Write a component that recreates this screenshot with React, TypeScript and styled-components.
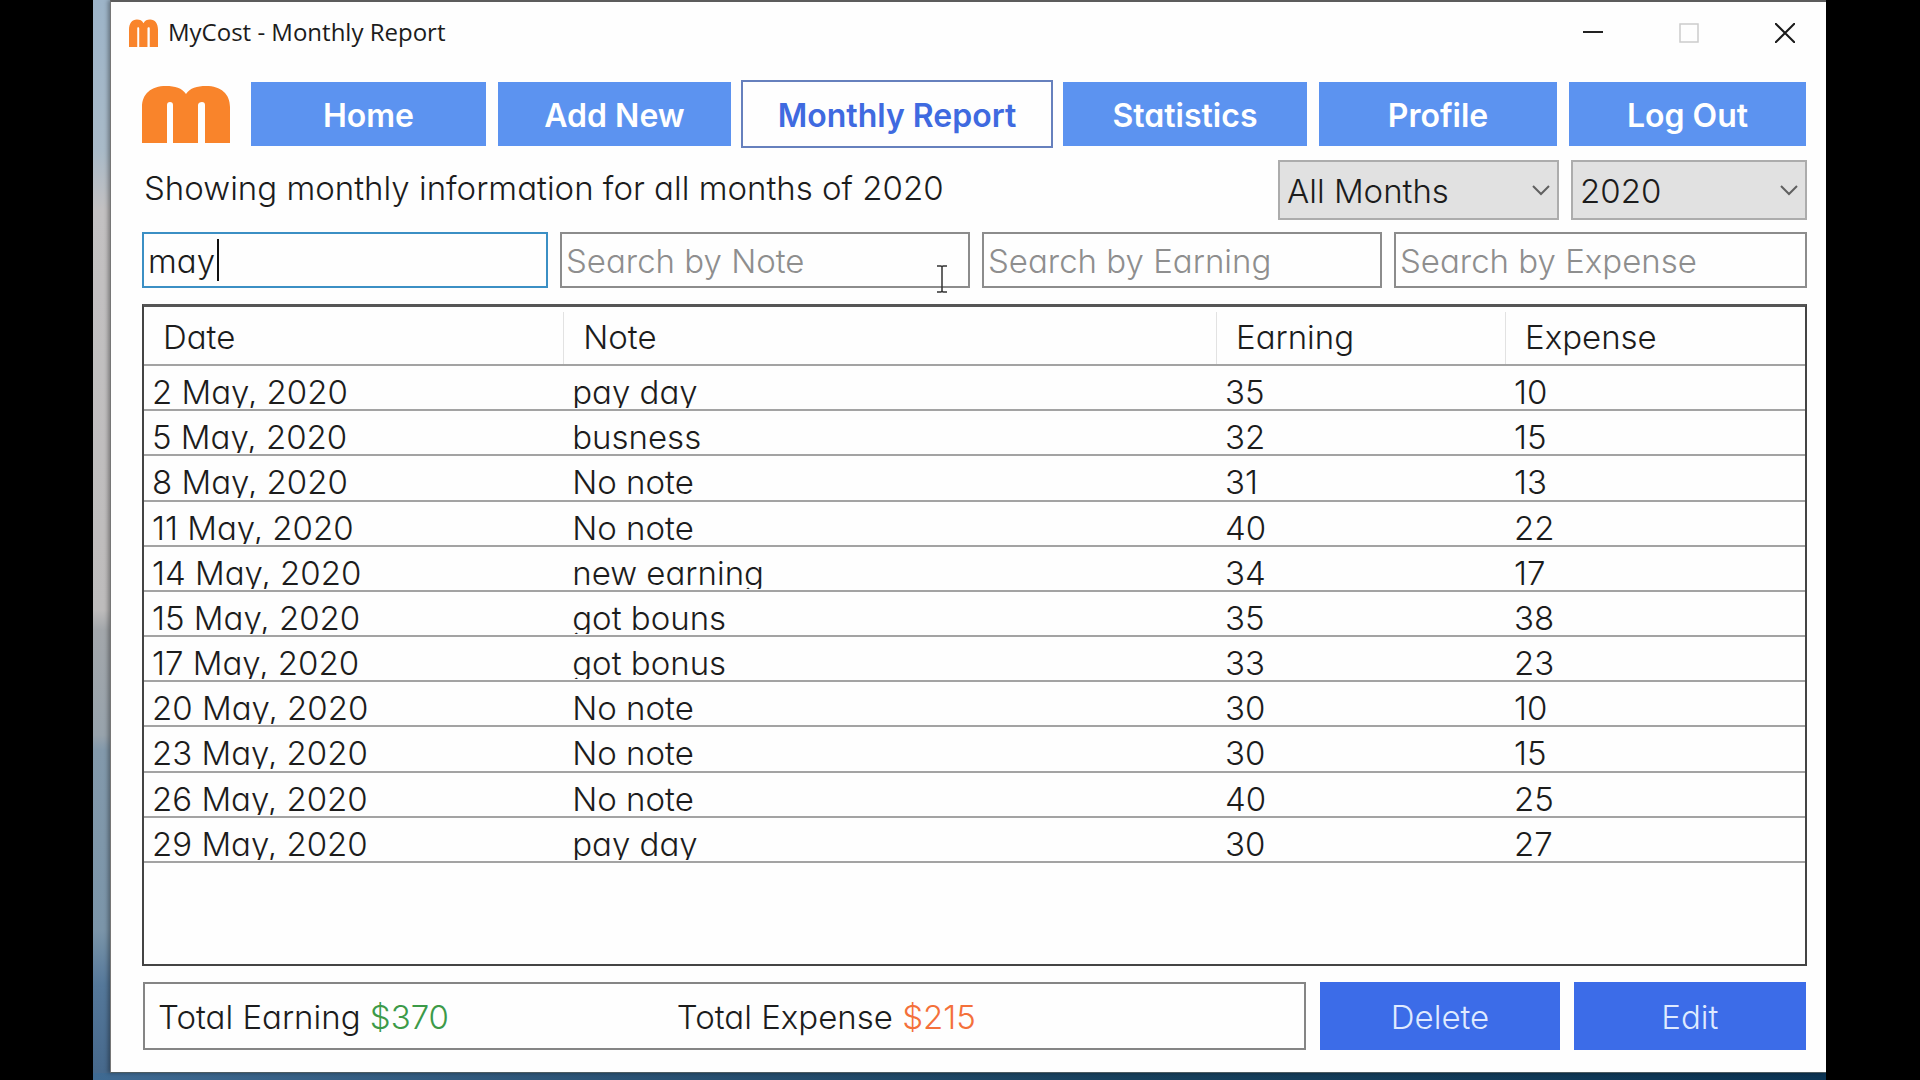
import React, { useState } from 'react';
import styled, { createGlobalStyle } from 'styled-components';

const GlobalStyle = createGlobalStyle`
  *, *::before, *::after { box-sizing: border-box; }
  body {
    margin: 0;
    background: #000;
    color: #1c1c1c;
    font-family: Inter, "Open Sans", sans-serif;
    font-size: 33px;
    font-weight: 300;
    line-height: 40px;
    font-feature-settings: "cv11" 1;
  }
  button, input, select { font: inherit; font-feature-settings: inherit; color: inherit; margin: 0; }
`;

const Stage = styled.div`
  display: flex;
  min-height: 100vh;
  padding: 0 94px 0 93px;
`;

const Desktop = styled.div`
  flex: 1;
  display: flex;
  padding: 0 0 7px 17px;
  background:
    linear-gradient(to right, #3f6a92, #2b5375 30%, #17405c 60%, #0b3454) bottom / 100% 7px no-repeat,
    linear-gradient(to bottom, #9db4c8 0, #a9bac8 150px, #c3c1c2 210px, #bebcbc 610px,
      #a3a7ab 630px, #98a3ac 735px, #8399ab 750px, #7b95a9 930px, #55789a 985px, #47698c 1071px);
`;

const Window = styled.div`
  flex: 1;
  display: flex;
  flex-direction: column;
  background: #fefefe;
  border-top: 2px solid #5c5c5c;
  border-left: 1px solid #777;
  border-bottom: 1px solid #4d5c62;
  box-shadow: -2px 0 4px rgba(0, 0, 0, 0.35);
`;

const TitleBar = styled.header`
  display: flex;
  align-items: center;
  height: 62px;
  padding-left: 18px;
  font-family: "Open Sans", "Noto Sans", sans-serif;
  font-size: 24px;
  font-weight: 400;
`;

const Title = styled.h1`
  flex: 1;
  margin: 0 0 2px 10px;
  font: inherit;
`;

const Controls = styled.div`
  display: flex;
  gap: 14px;
`;

const ControlButton = styled.button`
  display: grid;
  place-items: center;
  width: 82px;
  height: 48px;
  padding: 0;
  border: 0;
  background: none;
`;

const Main = styled.main`
  flex: 1;
  display: flex;
  flex-direction: column;
  padding: 18px 19px 22px 31px;
`;

const Nav = styled.nav`
  display: grid;
  grid-template-columns: 97px 235fr 233fr 308fr 244fr 238fr 237fr;
  gap: 12px;
  align-items: center;
  margin-right: 1px;
`;

const NavButton = styled.button<{ $active?: boolean }>`
  height: 64px;
  padding: 4px 0 0;
  border: 0;
  font-size: 32px;
  font-weight: 600;
  background: ${p => (p.$active ? '#fefefe' : '#5c93f0')};
  color: ${p => (p.$active ? '#3f6ae0' : '#fff')};
  box-shadow: ${p => (p.$active ? '0 0 0 2px #6680bd' : 'none')};
`;

const FilterRow = styled.div`
  display: grid;
  grid-template-columns: 1fr 281px 236px;
  gap: 12px;
  margin-top: 14px;
`;

const Summary = styled.p`
  margin: 8px 0 0 2px;
`;

const SelectBox = styled.div`
  display: grid;
  align-items: center;
  & > * { grid-area: 1 / 1; }
  & > svg { justify-self: end; margin-right: 8px; pointer-events: none; }
`;

const Select = styled.select`
  appearance: none;
  width: 100%;
  height: 60px;
  padding: 2px 32px 0 7px;
  border: 2px solid #acacac;
  border-radius: 0;
  background: #e1e1e1;
`;

const SearchRow = styled.div`
  display: grid;
  grid-template-columns: 406fr 410fr 400fr 413fr;
  gap: 12px;
  margin-top: 12px;
`;

const SearchInput = styled.input`
  width: 100%;
  height: 56px;
  padding: 2px 4px 0;
  border: 2px solid #8c8c8c;
  border-radius: 0;
  background: #fefefe;
  caret-color: transparent;
  outline: 0;
  &::placeholder { color: #8e8e8e; opacity: 1; }
  &:focus { border-color: #3b8fc4; }
`;

const SearchField = styled.div`
  position: relative;
`;

const Caret = styled.i`
  position: absolute;
  top: 7px;
  left: 75px;
  width: 2px;
  height: 42px;
  background: #111;
`;

const Pointer = styled.svg`
  position: absolute;
  right: 22px;
  bottom: -5px;
`;

const TablePanel = styled.div`
  flex: 1;
  margin-top: 16px;
  border: 2px solid #444;
  border-top: 3px solid #555;
`;

const Table = styled.table`
  width: 100%;
  height: 556px;
  table-layout: fixed;
  border-collapse: separate;
  border-spacing: 0;
`;

const Column = styled.col<{ $share: number }>`
  width: ${p => p.$share}%;
`;

const HeadCell = styled.th`
  height: 59px;
  padding: 0;
  border-bottom: 2px solid #a3a3a3;
  font-weight: 300;
  text-align: left;
`;

const HeadLabel = styled.div`
  height: 52px;
  margin-top: 5px;
  padding: 5px 0 0 19px;
  border-right: 1px solid #e2e2e2;
  ${HeadCell}:last-child & { border-right: 0; }
`;

const Cell = styled.td`
  padding: 0;
  border-bottom: 2px solid #a3a3a3;
  vertical-align: top;
`;

const CellText = styled.div`
  height: 42px;
  padding: 6px 0 0 8px;
  overflow: hidden;
  white-space: nowrap;
`;

const Footer = styled.footer`
  display: grid;
  grid-template-columns: 1162fr 239fr 232fr;
  gap: 14px;
  margin: 16px 1px 0;
`;

const Totals = styled.div`
  display: grid;
  grid-template-columns: 524fr 634fr;
  align-items: center;
  height: 68px;
  padding: 2px 0 0 13px;
  border: 2px solid #858585;
`;

const Amount = styled.span<{ $tone: 'earning' | 'expense' }>`
  color: ${p => (p.$tone === 'earning' ? '#3c9a48' : '#f4703a')};
`;

const ActionButton = styled.button`
  height: 68px;
  padding: 2px 0 0;
  border: 0;
  background: #3c6ce8;
  color: #dfeaff;
`;

const Logo = ({ width, height }: { width: number; height: number }) => (
  <svg width={width} height={height} viewBox="0 0 88 58" preserveAspectRatio="none" aria-hidden="true">
    <path
      fill="#f9842b"
      d="M0 58V22C0 9 9 1 24 1c9 0 16 2 20 8 4-6 11-8 20-8 15 0 24 8 24 21v36H63V20c0-2-1-3-3-3s-4 1-4 3v38H31V20c0-2-1-3-3-3s-3 1-3 3v38z"
    />
  </svg>
);

const Chevron = () => (
  <svg width="20" height="12" viewBox="0 0 20 12" fill="none" stroke="#606060" strokeWidth="2" aria-hidden="true">
    <path d="M2 2l8 8 8-8" />
  </svg>
);

const NAV_ITEMS = ['Home', 'Add New', 'Monthly Report', 'Statistics', 'Profile', 'Log Out'];

const COLUMNS = [
  { label: 'Date', share: 25.3 },
  { label: 'Note', share: 39.3 },
  { label: 'Earning', share: 17.4 },
  { label: 'Expense', share: 18 },
];

const ROWS: [string, string, number, number][] = [
  ['2 May, 2020', 'pay day', 35, 10],
  ['5 May, 2020', 'busness', 32, 15],
  ['8 May, 2020', 'No note', 31, 13],
  ['11 May, 2020', 'No note', 40, 22],
  ['14 May, 2020', 'new earning', 34, 17],
  ['15 May, 2020', 'got bouns', 35, 38],
  ['17 May, 2020', 'got bonus', 33, 23],
  ['20 May, 2020', 'No note', 30, 10],
  ['23 May, 2020', 'No note', 30, 15],
  ['26 May, 2020', 'No note', 40, 25],
  ['29 May, 2020', 'pay day', 30, 27],
];

export default function App() {
  const [date, setDate] = useState('may');

  return (
    <>
      <GlobalStyle />
      <Stage>
        <Desktop>
          <Window>
            <TitleBar>
              <Logo width={29} height={28} />
              <Title>MyCost - Monthly Report</Title>
              <Controls>
                <ControlButton aria-label="Minimize">
                  <svg width="20" height="20" stroke="#222" strokeWidth="2"><path d="M0 9h20" /></svg>
                </ControlButton>
                <ControlButton aria-label="Maximize" disabled>
                  <svg width="20" height="20" fill="none" stroke="#ccc" strokeWidth="1.5"><path d="M1 1h18v18H1z" /></svg>
                </ControlButton>
                <ControlButton aria-label="Close">
                  <svg width="20" height="20" stroke="#1a1a1a" strokeWidth="2"><path d="M0 0l20 20M20 0L0 20" /></svg>
                </ControlButton>
              </Controls>
            </TitleBar>
            <Main>
              <Nav>
                <Logo width={88} height={58} />
                {NAV_ITEMS.map(item => (
                  <NavButton key={item} $active={item === 'Monthly Report'}>{item}</NavButton>
                ))}
              </Nav>
              <FilterRow>
                <Summary>Showing monthly information for all months of 2020</Summary>
                <SelectBox>
                  <Select aria-label="Month"><option>All Months</option></Select>
                  <Chevron />
                </SelectBox>
                <SelectBox>
                  <Select aria-label="Year"><option>2020</option></Select>
                  <Chevron />
                </SelectBox>
              </FilterRow>
              <SearchRow>
                <SearchField>
                  <SearchInput
                    aria-label="Search by Date"
                    autoFocus
                    value={date}
                    onChange={e => setDate(e.target.value)}
                  />
                  <Caret />
                </SearchField>
                <SearchField>
                  <SearchInput aria-label="Search by Note" placeholder="Search by Note" />
                  <Pointer width="12" height="28" viewBox="0 0 12 28" fill="none" stroke="#333" strokeWidth="1.5" aria-hidden="true">
                    <path d="M1 1h4l1 1 1-1h4M6 2v24M1 27h4l1-1 1 1h4" />
                  </Pointer>
                </SearchField>
                <SearchField>
                  <SearchInput aria-label="Search by Earning" placeholder="Search by Earning" />
                </SearchField>
                <SearchField>
                  <SearchInput aria-label="Search by Expense" placeholder="Search by Expense" />
                </SearchField>
              </SearchRow>
              <TablePanel>
                <Table>
                  <colgroup>
                    {COLUMNS.map(c => <Column key={c.label} $share={c.share} />)}
                  </colgroup>
                  <thead>
                    <tr>
                      {COLUMNS.map(c => (
                        <HeadCell key={c.label} scope="col"><HeadLabel>{c.label}</HeadLabel></HeadCell>
                      ))}
                    </tr>
                  </thead>
                  <tbody>
                    {ROWS.map(row => (
                      <tr key={row[0]}>
                        {row.map((value, i) => <Cell key={i}><CellText>{value}</CellText></Cell>)}
                      </tr>
                    ))}
                  </tbody>
                </Table>
              </TablePanel>
              <Footer>
                <Totals>
                  <span>Total Earning <Amount $tone="earning">$370</Amount></span>
                  <span>Total Expense <Amount $tone="expense">$215</Amount></span>
                </Totals>
                <ActionButton>Delete</ActionButton>
                <ActionButton>Edit</ActionButton>
              </Footer>
            </Main>
          </Window>
        </Desktop>
      </Stage>
    </>
  );
}
